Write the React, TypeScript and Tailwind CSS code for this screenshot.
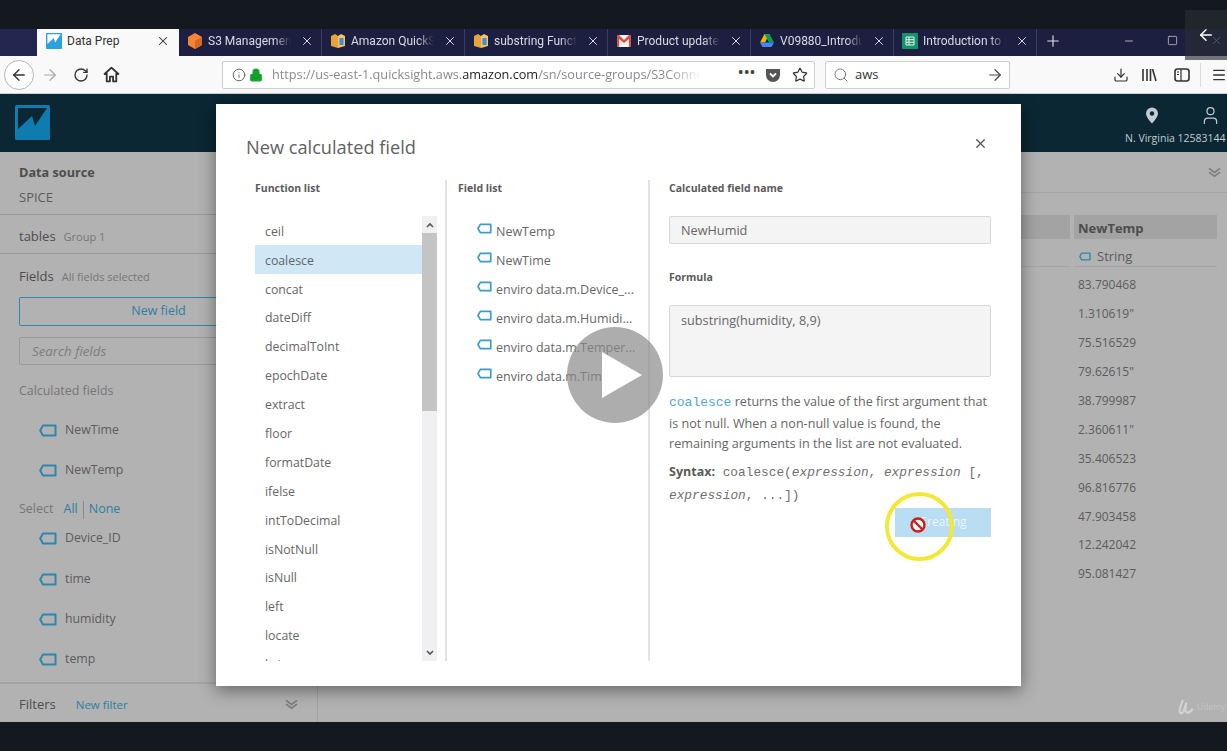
import React from "react";
import {
  ArrowLeft,
  ArrowRight,
  Download,
  Info,
  Lock,
  Menu,
  Minus,
  Plus,
  RotateCw,
  Search,
  Square,
  Star,
  User,
  X,
} from "lucide-react";

const functions = [
  "ceil",
  "coalesce",
  "concat",
  "dateDiff",
  "decimalToInt",
  "epochDate",
  "extract",
  "floor",
  "formatDate",
  "ifelse",
  "intToDecimal",
  "isNotNull",
  "isNull",
  "left",
  "locate",
  "ltrim",
];

const fieldList = [
  "NewTemp",
  "NewTime",
  "enviro data.m.Device_...",
  "enviro data.m.Humidi...",
  "enviro data.m.Temper...",
  "enviro data.m.Time.s",
];

const values = [
  "83.790468",
  '1.310619"',
  "75.516529",
  '79.62615"',
  "38.799987",
  '2.360611"',
  "35.406523",
  "96.816776",
  "47.903458",
  "12.242042",
  "95.081427",
];

function TagIcon({ className = "w-[18px] h-[13px]" }: { className?: string }) {
  return (
    <svg viewBox="0 0 18 13" className={className} fill="none" stroke="#2f86ad" strokeWidth="2">
      <path d="M4 1.5h12.5v10H4L1.2 6.5z" strokeLinejoin="round" />
    </svg>
  );
}

function Chevrons() {
  return (
    <svg viewBox="0 0 14 12" className="w-[13px] h-[11px]" fill="none" stroke="#7d7d7d" strokeWidth="1.8">
      <path d="M1 1.5l6 4.5 6-4.5M1 5.5l6 4.5 6-4.5" />
    </svg>
  );
}

function Favicon({ kind }: { kind: string }) {
  if (kind === "s3") {
    return (
      <svg viewBox="0 0 16 16" className="w-4 h-4 shrink-0">
        <path d="M8 0l7 4v8l-7 4-7-4V4z" fill="#f58536" />
        <path d="M8 8l7-4v8l-7 4z" fill="#d9691e" />
      </svg>
    );
  }
  if (kind === "box") {
    return (
      <svg viewBox="0 0 16 16" className="w-4 h-4 shrink-0">
        <path d="M1 3l4-2 3 2v12l-7-2z" fill="#e8a33d" />
        <path d="M8 3l3-2 4 2v10l-7 2z" fill="#f5c26b" />
        <rect x="9.5" y="5" width="4" height="7" fill="#3f8fd0" />
      </svg>
    );
  }
  if (kind === "mail") {
    return (
      <svg viewBox="0 0 16 16" className="w-4 h-4 shrink-0">
        <rect x="1" y="2" width="14" height="12" fill="#f4f0ee" />
        <path d="M1 2h2l5 5 5-5h2v12h-2V6L8 10 3 6v8H1z" fill="#d8503f" />
      </svg>
    );
  }
  if (kind === "drive") {
    return (
      <svg viewBox="0 0 16 16" className="w-4 h-4 shrink-0">
        <path d="M5.5 1h5L6 9.5H1z" fill="#f4b400" />
        <path d="M10.5 1L15 9.5h-5L5.5 1z" fill="#0f9d58" />
        <path d="M1 9.5h14L12.5 14h-9z" fill="#4285f4" />
      </svg>
    );
  }
  if (kind === "sheet") {
    return (
      <svg viewBox="0 0 16 16" className="w-4 h-4 shrink-0">
        <rect width="16" height="16" rx="1" fill="#12936b" />
        <path d="M4 4h8v8H4zM4 6.7h8M4 9.3h8M7 4v8" fill="none" stroke="#e8f5ef" strokeWidth="1" />
      </svg>
    );
  }
  return (
    <svg viewBox="0 0 35 35" className="w-4 h-4 shrink-0">
      <rect width="35" height="35" rx="1.5" fill="#2aa3dc" />
      <path d="M3 3h29L20 21 17 11 3 24z" fill="#ffffff" />
    </svg>
  );
}

function QsLogo() {
  return (
    <svg viewBox="0 0 35 35" className="w-[35px] h-[35px]">
      <rect width="35" height="35" rx="1.5" fill="#0f7cb0" />
      <path d="M3 3h29L20 21 17 11 3 24z" fill="#0a2733" />
    </svg>
  );
}

function Tab({ icon, title }: { icon: string; title: string }) {
  return (
    <div className="w-[143px] h-full flex items-center pl-[8px] pr-[7px] pb-[4px] gap-[5px] border-r border-[#3a3e62] text-[#d9dbe4]">
      <Favicon kind={icon} />
      <span className="flex-1 overflow-hidden whitespace-nowrap font-['Roboto',sans-serif] text-[12px] [mask-image:linear-gradient(to_right,black_80%,transparent)]">
        {title}
      </span>
      <X className="w-[14px] h-[14px] shrink-0 ml-[4px]" strokeWidth={1.7} />
    </div>
  );
}

function SideField({ name, height }: { name: string; height: string }) {
  return (
    <div className={`flex items-center gap-[8px] pl-[20px] text-[12.3px] text-[#5c5c5c] ${height}`}>
      <TagIcon />
      <span>{name}</span>
    </div>
  );
}

function Sidebar() {
  return (
    <aside className="w-[318px] shrink-0 border-r border-[#a3a3a3] flex flex-col">
      <div className="h-[63px] border-b border-[#9a9a9a] pl-[19px] pt-[11px]">
        <div className="text-[12.7px] font-bold text-[#4d4d4d] leading-[18px]">Data source</div>
        <div className="text-[13px] text-[#5c5c5c] leading-[18px] mt-[7px]">SPICE</div>
      </div>
      <div className="h-[39px] border-b border-[#9a9a9a] pl-[19px] pt-[6px] flex items-center gap-[8px]">
        <span className="text-[13px] text-[#4d4d4d]">tables</span>
        <span className="text-[11px] text-[#767676]">Group 1</span>
      </div>
      <div className="flex-1 min-h-0 px-[19px]">
        <div className="h-[43px] flex items-center gap-[8px] pt-[3px]">
          <span className="text-[13px] text-[#4d4d4d]">Fields</span>
          <span className="text-[11px] text-[#767676]">All fields selected</span>
        </div>
        <div className="h-[29px] rounded-[2px] border border-[#2a8ab5] flex items-center justify-center text-[12.5px] text-[#2f7da3]">
          New field
        </div>
        <div className="h-[28px] mt-[11px] pt-[1px] rounded-[2px] border border-[#9a9a9a] flex items-center pl-[12px] text-[13.3px] italic text-[#7d7d7d]">
          Search fields
        </div>
        <div className="text-[12.4px] text-[#767676] mt-[16px] leading-[20px]">Calculated fields</div>
        <div className="mt-[9px]">
          <SideField name="NewTime" height="h-[40px]" />
          <SideField name="NewTemp" height="h-[40px]" />
          <div className="h-[39px] flex items-center text-[12.5px]">
            <span className="text-[#767676] mr-[10px]">Select</span>
            <span className="text-[#2f7da3]">All</span>
            <span className="mx-[5px] w-px h-[18px] bg-[#8a8a8a]" />
            <span className="text-[#2f7da3]">None</span>
          </div>
          <SideField name="Device_ID" height="h-[19px] mb-[11px]" />
          <SideField name="time" height="h-[40px]" />
          <SideField name="humidity" height="h-[40px]" />
          <SideField name="temp" height="h-[40px]" />
        </div>
      </div>
      <div className="h-[40px] border-t-2 border-[#a3a3a3] pt-[3px] pl-[19px] pr-[19px] flex items-center text-[13px]">
        <span className="text-[#4d4d4d] mr-[20px]">Filters</span>
        <span className="text-[11.5px] text-[#2f7da3] flex-1">New filter</span>
        <Chevrons />
      </div>
    </aside>
  );
}

function MainArea() {
  return (
    <main className="flex-1 min-w-0 flex flex-col">
      <div className="h-[41px] border-b border-[#a6a6a6] flex items-center justify-end pr-[6px]">
        <Chevrons />
      </div>
      <div className="flex gap-[4px] justify-end pr-[10px] pt-[22px]">
        <div className="w-[300px] h-[52px]">
          <div className="h-[24px] bg-[#a3a3a3]" />
          <div className="h-[28px] border-b border-[#a6a6a6]" />
        </div>
        <div className="w-[143px]">
          <div className="h-[24px] bg-[#a3a3a3] pl-[4px] pt-[3px] flex items-center text-[13px] font-bold text-[#4d4d4d]">
            NewTemp
          </div>
          <div className="h-[28px] border-b border-[#a6a6a6] pl-[5px] pt-[8px] flex items-center gap-[6px] text-[13px] text-[#5c5c5c]">
            <TagIcon className="w-[12px] h-[9px]" />
            String
          </div>
          <div className="pl-[4px] pt-[4px]">
            {values.map((v) => (
              <div key={v} className="h-[28.9px] flex items-center text-[12px] text-[#5c5c5c]">
                {v}
              </div>
            ))}
          </div>
        </div>
      </div>
    </main>
  );
}

function Modal() {
  return (
    <div className="absolute left-[216px] top-[104px] w-[805px] h-[582px] bg-white shadow-[0_4px_16px_rgba(0,0,0,0.45)] text-[#666666]">
      <div className="h-[76px] pl-[30px] pr-[33px] pt-[26px] flex items-start justify-between">
        <h2 className="text-[18.2px] leading-[34px] text-[#5f5f5f]">New calculated field</h2>
        <X className="w-[15px] h-[15px] mt-[6px] text-[#555555]" strokeWidth={2} />
      </div>
      <div className="flex h-[481px] pl-[39px]">
        {/* Function list */}
        <div className="w-[190px] shrink-0">
          <div className="text-[10.5px] font-bold leading-[16px] text-[#5a5a5a]">Function list</div>
          <div className="flex mt-[20px] h-[445px]">
            <div className="w-[167px] h-full overflow-hidden">
              {functions.map((f) => (
                <div
                  key={f}
                  className={`h-[28.9px] pl-[10px] pt-[3px] flex items-center text-[12.3px] ${
                    f === "coalesce" ? "bg-[#d0e7f6] text-[#5f6468]" : ""
                  }`}
                >
                  {f}
                </div>
              ))}
            </div>
            <div className="w-[15px] h-full bg-[#f0f0f2] flex flex-col items-center">
              <div className="h-[17px] flex items-center justify-center">
                <svg viewBox="0 0 8 6" className="w-[8px] h-[6px]" fill="none" stroke="#555" strokeWidth="1.6">
                  <path d="M1 5l3-3 3 3" />
                </svg>
              </div>
              <div className="w-full h-[178px] bg-[#c4c4c4]" />
              <div className="flex-1" />
              <div className="h-[17px] flex items-center justify-center">
                <svg viewBox="0 0 8 6" className="w-[8px] h-[6px]" fill="none" stroke="#555" strokeWidth="1.6">
                  <path d="M1 1l3 3 3-3" />
                </svg>
              </div>
            </div>
          </div>
        </div>
        {/* Field list */}
        <div className="w-[203px] shrink-0 border-l-2 border-[#e2e2e2] pl-[11px]">
          <div className="text-[10.5px] font-bold leading-[16px] text-[#5a5a5a]">Field list</div>
          <div className="mt-[22px] pl-[19px]">
            {fieldList.map((f) => (
              <div key={f} className="h-[28.9px] flex items-center gap-[4px] text-[12.5px] whitespace-nowrap">
                <TagIcon className="w-[15px] h-[11px] mb-[7px] [&_path]:stroke-[#3d9bc7]" />
                {f}
              </div>
            ))}
          </div>
        </div>
        {/* Calculated field form */}
        <div className="w-[342px] shrink-0 border-l-2 border-[#e2e2e2] pl-[19px]">
          <div className="text-[10.5px] font-bold leading-[16px] text-[#5a5a5a]">Calculated field name</div>
          <div className="mt-[20px] w-[322px] h-[28px] bg-[#f4f4f4] border border-[#d8d8d8] rounded-[2px] pl-[11px] pt-[2px] flex items-center text-[12.7px]">
            NewHumid
          </div>
          <div className="mt-[25px] text-[10.5px] font-bold leading-[16px] text-[#5a5a5a]">Formula</div>
          <div className="mt-[20px] w-[322px] h-[72px] bg-[#f4f4f4] border border-[#d8d8d8] rounded-[2px] pl-[11px] pt-[5px] text-[12.7px] leading-[18px]">
            substring(humidity, 8,9)
          </div>
          <div className="w-[322px] mt-[15px] text-[12.6px] leading-[20.5px]">
            <span className="font-['Liberation_Mono',monospace] text-[13px] text-[#4fa8cf]">coalesce</span> returns the
            value of the first argument that is not null. When a non-null value is found, the remaining arguments in the
            list are not evaluated.
          </div>
          <div className="w-[322px] mt-[5px] text-[12.8px] leading-[23px] font-['Liberation_Mono',monospace] text-[#6f6f6f]">
            <span className="font-['Open_Sans',sans-serif] font-bold text-[12.5px] text-[#5a5a5a]">Syntax:</span> coalesce(
            <i>expression</i>, <i>expression</i> [, <i>expression</i>, ...])
          </div>
          <div className="w-[322px] mt-[1px] flex justify-end">
            <div className="w-[96px] h-[29px] bg-[#b9ddf3] flex items-center justify-center text-[12px] text-white/70">
              Creating
            </div>
          </div>
        </div>
      </div>
    </div>
  );
}

export default function App() {
  return (
    <div className="relative w-[1227px] h-[751px] overflow-hidden bg-[#14181f] font-['Open_Sans',sans-serif]">
      <div className="h-[29px]" />

      {/* Tab strip */}
      <div className="h-[27px] bg-[#1c1f3f] flex items-stretch">
        <div className="w-[37px] bg-[#232750]" />
        <div className="w-[142px] bg-[#f9f9fa] flex items-center pl-[9px] pr-[9px] pb-[4px] gap-[5px] text-[#333333]">
          <Favicon kind="qs" />
          <span className="flex-1 font-['Roboto',sans-serif] text-[12px] whitespace-nowrap">Data Prep</span>
          <X className="w-[14px] h-[14px]" strokeWidth={1.8} />
        </div>
        <Tab icon="s3" title="S3 Management Console" />
        <Tab icon="box" title="Amazon QuickSight" />
        <Tab icon="box" title="substring Function" />
        <Tab icon="mail" title="Product update - Gmail" />
        <Tab icon="drive" title="V09880_Introduction" />
        <Tab icon="sheet" title="Introduction to IoT" />
        <div className="w-[32px] pb-[4px] flex items-center justify-center text-[#e4e4ea]">
          <Plus className="w-[18px] h-[18px]" strokeWidth={1.5} />
        </div>
        <div className="flex-1 flex items-center justify-end gap-[32px] pr-[4px] pb-[4px] text-[#d9dbe4]">
          <Minus className="w-[12px] h-[12px]" strokeWidth={1.5} />
          <Square className="w-[11px] h-[11px]" strokeWidth={1.5} />
          <X className="w-[13px] h-[13px]" strokeWidth={1.2} />
        </div>
      </div>

      {/* Browser toolbar */}
      <div className="h-[38px] bg-[#f9f9fa] border-b border-[#cfcfd2] flex items-center text-[#333333]">
        <div className="ml-[4px] w-[30px] h-[30px] rounded-full border border-[#b8b8bb] bg-white flex items-center justify-center shrink-0">
          <ArrowLeft className="w-[18px] h-[18px]" strokeWidth={1.8} />
        </div>
        <ArrowRight className="ml-[7px] w-[18px] h-[18px] text-[#a8a8ac] shrink-0" strokeWidth={1.6} />
        <RotateCw className="ml-[14px] w-[16px] h-[16px] shrink-0" strokeWidth={2} />
        <svg viewBox="0 0 16 16" className="ml-[14px] w-[17px] h-[17px] shrink-0" fill="none" stroke="#333" strokeWidth="1.7">
          <path d="M1 8l7-6.5L15 8M3.5 6.5V14.5h3V10h3v4.5h3V6.5" strokeLinejoin="round" />
        </svg>
        <div className="ml-[102px] w-[593px] h-[28px] bg-white border border-[#cfcfd2] rounded-[2px] flex items-center pl-[9px] pr-[6px] shrink-0">
          <Info className="w-[14px] h-[14px] text-[#555555] shrink-0" strokeWidth={1.5} />
          <Lock className="ml-[3px] w-[14px] h-[14px] text-[#12a02c] fill-[#12a02c] shrink-0" strokeWidth={2} />
          <span className="ml-[9px] w-[430px] overflow-hidden whitespace-nowrap text-[12.7px] text-[#8a8a8f] [mask-image:linear-gradient(to_right,black_92%,transparent)]">
            https://us-east-1.quicksight.aws.<span className="text-[#222222]">amazon.com</span>/sn/source-groups/S3Connector
          </span>
          <span className="ml-auto text-[13px] font-bold leading-none tracking-[1px] text-[#444444] mb-[5px]">•••</span>
          <svg viewBox="0 0 16 16" className="ml-[9px] w-[16px] h-[16px] shrink-0">
            <path d="M1 2h14v6a7 7 0 0 1-14 0z" fill="#555555" />
            <path d="M5 6.5l3 3 3-3" fill="none" stroke="#ffffff" strokeWidth="1.8" />
          </svg>
          <Star className="ml-[11px] w-[16px] h-[16px] text-[#333333]" strokeWidth={1.8} />
        </div>
        <div className="ml-[10px] w-[185px] h-[28px] bg-white border border-[#cfcfd2] rounded-[2px] flex items-center pl-[7px] pr-[5px] shrink-0">
          <Search className="w-[16px] h-[16px] text-[#777777]" strokeWidth={1.5} />
          <span className="ml-[6px] flex-1 text-[13px] text-[#333333]">aws</span>
          <ArrowRight className="w-[18px] h-[18px] text-[#444444]" strokeWidth={1.6} />
        </div>
        <Download className="ml-[103px] w-[16px] h-[16px] shrink-0" strokeWidth={1.8} />
        <svg viewBox="0 0 16 16" className="ml-[12px] w-[16px] h-[16px] shrink-0" fill="none" stroke="#333" strokeWidth="1.6">
          <path d="M2 2v12M6 2v12M9.5 2v12M11.5 2l3.5 12" />
        </svg>
        <svg viewBox="0 0 16 16" className="ml-[17px] w-[16px] h-[16px] shrink-0" fill="none" stroke="#333" strokeWidth="1.6">
          <rect x="1" y="2" width="14" height="12" rx="2.5" />
          <path d="M7 2v12M3 5h2M3 7.5h2" strokeWidth="1.2" />
        </svg>
        <div className="ml-[10px] w-px h-[24px] bg-[#dcdcde] shrink-0" />
        <Menu className="ml-[10px] w-[16px] h-[16px] shrink-0" strokeWidth={2} />
      </div>

      {/* QuickSight header */}
      <header className="h-[58px] bg-[#0a2733] flex items-stretch">
        <div className="pl-[15px] pt-[11px] flex-1">
          <QsLogo />
        </div>
        <div className="w-[105px] shrink-0 pt-[11px] pl-[3px] overflow-hidden text-[#c3ccd0]">
          <div className="flex items-center pl-[20px] gap-[41px]">
            <svg viewBox="0 0 12 16" className="w-[12px] h-[17px] mx-[1px]">
              <path d="M6 0a6 6 0 0 1 6 6c0 3.5-4 7.5-6 10C4 13.5 0 9.500 0 6a6 6 0 0 1 6-6z" fill="#c3ccd0" />
              <circle cx="6" cy="6" r="2.200" fill="#0a2733" />
            </svg>
            <User className="w-[21px] h-[21px]" strokeWidth={1.4} />
          </div>
          <div className="text-[10.5px] mt-[5px] whitespace-nowrap">N. Virginia 12583144</div>
        </div>
      </header>

      {/* Dimmed page */}
      <div className="h-[570px] bg-[#b2b2b2] flex">
        <Sidebar />
        <MainArea />
      </div>

      <Modal />

      {/* Video overlays */}
      <div className="absolute left-[567px] top-[327px] w-[96px] h-[96px] rounded-full bg-[#8a8a8a]/70 flex items-center justify-center">
        <svg viewBox="0 0 40 46" className="w-[40px] h-[46px] ml-[14px]">
          <path d="M0 0l40 23L0 46z" fill="#ffffff" />
        </svg>
      </div>
      <div className="absolute left-[885px] top-[492px] w-[69px] h-[69px] rounded-full border-[4px] border-[#f3e835]" />
      <svg viewBox="0 0 16 16" className="absolute left-[910px] top-[517px] w-[16px] h-[16px]">
        <circle cx="8" cy="8" r="6.5" fill="#ffffff" stroke="#cc1f1a" strokeWidth="2.4" />
        <path d="M3.5 3.5l9 9" stroke="#cc1f1a" strokeWidth="2.4" />
      </svg>
      <div className="absolute left-[1185px] top-[10px] w-[42px] h-[50px] bg-[#2a2d33]/65 flex items-center justify-center">
        <ArrowLeft className="w-[18px] h-[18px] text-white" strokeWidth={2} />
      </div>
      <div className="absolute left-[1177px] top-[699px] flex items-center gap-[3px] text-[#c4c4c4]">
        <svg viewBox="0 0 18 18" className="w-[17px] h-[17px]" fill="none" stroke="#d2d2d2" strokeWidth="2.4" strokeLinecap="round">
          <path d="M6 2C4 6 2 10 3 14c1 2 3 1 4-1l3-9c-1 4-2 9 0 10 2 1 4 0 6-3" />
        </svg>
        <span className="text-[8.500px] leading-none">Udemy</span>
      </div>
    </div>
  );
}
